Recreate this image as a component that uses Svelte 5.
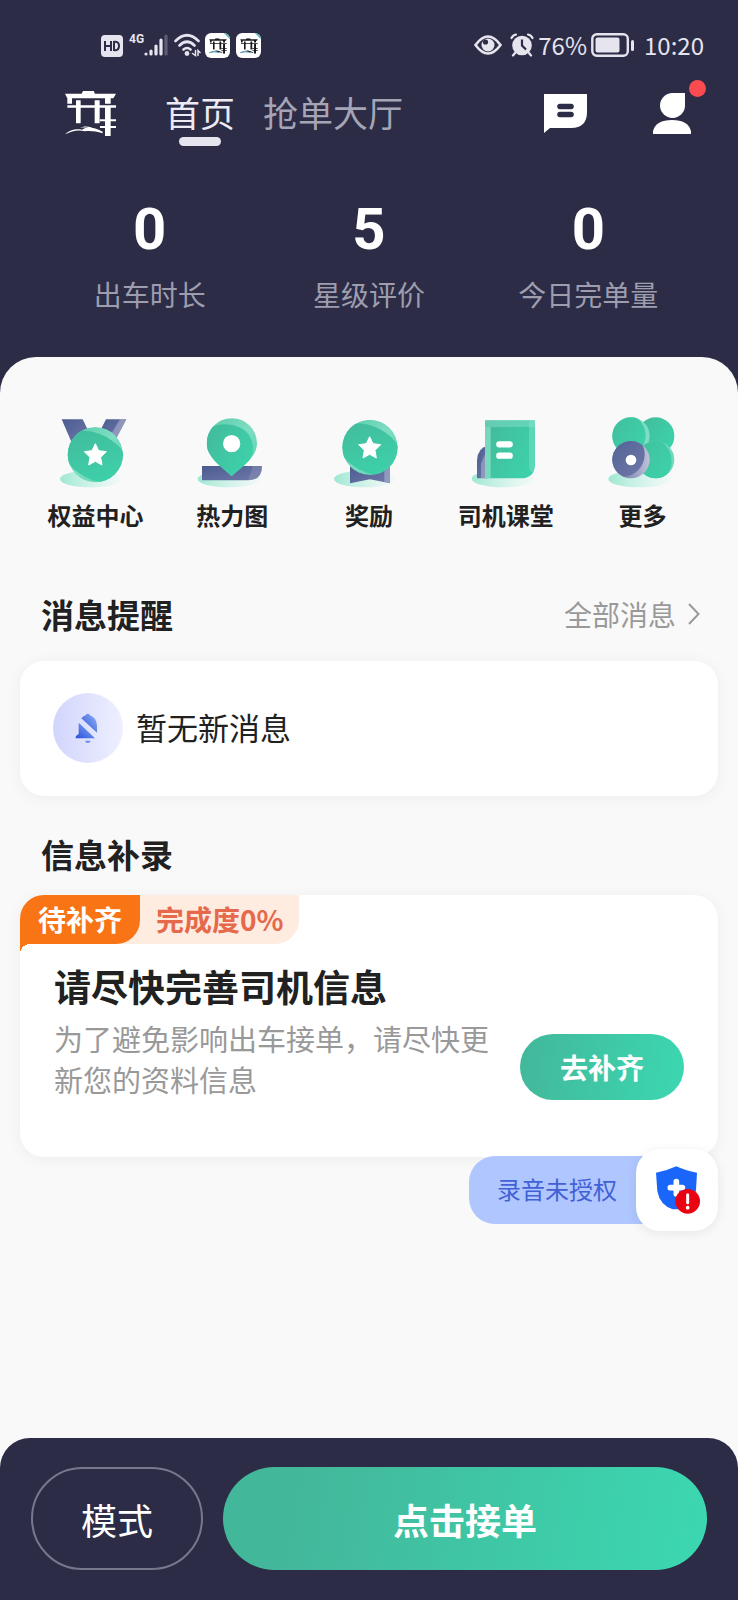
<script>
  const stats = [
    { value: '0', label: '出车时长' },
    { value: '5', label: '星级评价' },
    { value: '0', label: '今日完单量' }
  ];
  const star = 'M0 -33 L10 -12 L33 -9 L16 8 L20 31 L0 20 L-20 31 L-16 8 L-33 -9 L-10 -12 Z';
</script>

{#snippet gate()}
  <path d="M95 68 L99 60 H131 L135 68 H198 L190 82 H182 V98 H165 V82 H66 V98 H52 V82 L45 68 Z" />
  <path d="M52 103 H198 V110 H52 Z M78 88 H92 V157 H78 Z M134 88 H149 V157 H134 Z M165 103 H182 V195 H165 Z M150 145 H198 V151 H150 Z M150 165 H198 V171 H150 Z" />
  <path d="M46 190 C62 174 82 174 96 176 C112 166 130 168 158 182 L158 187 C136 180 120 179 104 181 C84 176 66 180 46 190 Z M88 171 C102 164 122 164 136 176 C118 169 104 169 88 171 Z" />
{/snippet}

{#snippet appBadge()}
  <svg class="app-badge" viewBox="0 0 24 24" aria-hidden="true">
    <rect width="24" height="24" rx="6" fill="#fff" />
    <path d="M18 0 A6 6 0 0 1 24 6 Z" fill="#5fb5ae" />
    <svg x="4" y="5" width="17" height="15" viewBox="45 60 153 135" fill="#17171c">{@render gate()}</svg>
    <path d="M4 19 q5 -2 10 0" stroke="#5a9fc0" fill="none" />
  </svg>
{/snippet}

<div class="page">
  <header>
    <div class="status">
      <div class="status-side">
        <svg width="22" height="23" viewBox="0 0 22 23" aria-hidden="true">
          <rect width="22" height="22" y="1" rx="4" fill="#e6e4ee" />
          <path d="M4 7 V17 M10 7 V17 M4 12 H10 M13 7 V17 M13 7.800 H14.500 Q18 8 18 12 Q18 16 14.500 16.200 H13" stroke="#2c2c46" stroke-width="2" fill="none" />
        </svg>
        <span class="net">4G</span>
        <svg class="signal" width="24" height="24" viewBox="0 0 24 24" stroke-width="3.200" stroke-linecap="round" stroke="#e6e4ee" aria-hidden="true">
          <path d="M2 21 V21 M7 18 V21 M12 13 V21 M17 7 V21" />
          <path d="M22 3 V21" stroke="#5d5d74" />
        </svg>
        <svg class="wifi" width="27" height="24" viewBox="0 0 27 24" fill="none" stroke="#e6e4ee" stroke-width="2.600" stroke-linecap="round" aria-hidden="true">
          <path d="M1.500 8 Q13 -3.500 24.500 8 M5.500 12.500 Q13 5 20.500 12.500 M9.500 16.500 Q13 13.500 16.500 16.500" />
          <circle cx="13" cy="20.500" r="2.400" fill="#e6e4ee" stroke="none" />
          <path d="M21.500 17.500 V22.500 L18.500 20.500 M24 22.500 V17.500 L26 19.500" stroke-width="1.500" />
        </svg>
        {@render appBadge()}
        {@render appBadge()}
      </div>
      <div class="status-side">
        <svg width="28" height="20" viewBox="0 0 28 20" aria-hidden="true">
          <path d="M1.500 10 Q14 -7 26.500 10 Q14 27 1.500 10 Z" fill="none" stroke="#e6e4ee" stroke-width="2.600" />
          <circle cx="14" cy="10" r="6.500" fill="#e6e4ee" />
          <circle cx="11.500" cy="7" r="2.600" fill="#2c2c46" />
        </svg>
        <svg class="alarm" width="24" height="24" viewBox="0 0 24 24" aria-hidden="true">
          <circle cx="12" cy="12.500" r="9.800" fill="#e6e4ee" />
          <path d="M1.500 5 Q3 2 6 1.500 M22.500 5 Q21 2 18 1.500 M5 20 L3 22.500 M19 20 L21 22.500" stroke="#e6e4ee" stroke-width="2.200" fill="none" stroke-linecap="round" />
          <path d="M12 6.500 V12.500 L16 16.500" stroke="#2c2c46" stroke-width="2.200" fill="none" />
        </svg>
        <span class="status-text">76%</span>
        <svg class="battery" width="43" height="24" viewBox="0 0 43 24" aria-hidden="true">
          <rect x="1.300" y="1.300" width="35.500" height="21.400" rx="4.500" fill="none" stroke="#e6e4ee" stroke-width="2.400" />
          <rect x="4.500" y="4.500" width="24" height="15" rx="2" fill="#e6e4ee" />
          <rect x="40" y="7" width="3" height="11" rx="1.500" fill="#e6e4ee" />
        </svg>
        <span class="status-text clock">10:20</span>
      </div>
    </div>

    <div class="topbar">
      <svg class="brand" viewBox="45 60 153 135" fill="#fff" role="img" aria-label="首页">{@render gate()}</svg>
      <nav>
        <a class="active" href="#home">首页</a>
        <a href="#hall">抢单大厅</a>
      </nav>
      <div class="actions">
        <button class="icon-button" aria-label="消息">
          <svg width="43" height="39" viewBox="0 0 43 39" aria-hidden="true">
            <path d="M0 0 H43 V18 Q43 34 27 34 H6 L0 39 Z" fill="#fff" />
            <path d="M16 12.500 H27 M16 20.500 H27" stroke="#2c2c46" stroke-width="5.600" stroke-linecap="round" />
          </svg>
        </button>
        <button class="icon-button" aria-label="我的">
          <svg width="38" height="41" viewBox="0 0 38 41" fill="#fff" aria-hidden="true">
            <path d="M19.500 0 H32 V12.500 A12.500 12.500 0 1 1 19.500 0 Z" />
            <path d="M0 41 V38 Q3 27 19 27 Q35 27 38 38 V41 Z" />
          </svg>
          <span class="dot"></span>
        </button>
      </div>
    </div>

    <div class="stats">
      {#each stats as s}
        <div class="stat"><strong>{s.value}</strong><span>{s.label}</span></div>
      {/each}
    </div>
  </header>

  <main>
    <div class="features">
      <a href="#rights">
        <svg viewBox="87 50 216 216" aria-hidden="true">
          <defs>
            <linearGradient id="green" x1="0" y1="0" x2="1" y2="0.600"><stop offset="0" stop-color="#43b99a" /><stop offset="1" stop-color="#3dd1a9" /></linearGradient>
            <linearGradient id="pale" x1="0" y1="0" x2="1" y2="1"><stop offset="0" stop-color="#54cba9" /><stop offset="0.500" stop-color="#7eddc3" /><stop offset="1" stop-color="#4fcfab" /></linearGradient>
            <linearGradient id="navy" x1="0" y1="0" x2="1" y2="1"><stop offset="0" stop-color="#4b5b90" /><stop offset="1" stop-color="#7079a9" /></linearGradient>
            <linearGradient id="lilac" x1="0" y1="0" x2="1" y2="0"><stop offset="0" stop-color="#5c659a" /><stop offset="1" stop-color="#c3c6dc" /></linearGradient>
            <linearGradient id="shade" x1="0" y1="0" x2="1" y2="0"><stop offset="0" stop-color="#9ee8d2" /><stop offset="1" stop-color="#e9f9f5" stop-opacity="0.500" /></linearGradient>
            <clipPath id="medal"><circle cx="196" cy="163" r="83" /></clipPath>
          </defs>
          <ellipse cx="182" cy="236" rx="92" ry="25" fill="url(#shade)" />
          <path d="M95 57 H158 L184 110 L124 124 Z" fill="url(#navy)" />
          <path d="M228 57 H289 L256 120 L206 100 Z" fill="url(#navy)" />
          <path d="M270 57 H289 L256 120 L238 110 Z" fill="#aeb3d0" opacity="0.600" />
          <g clip-path="url(#medal)">
            <circle cx="196" cy="163" r="83" fill="url(#pale)" />
            <ellipse cx="196" cy="169" rx="104" ry="68" transform="rotate(28 196 169)" fill="url(#green)" />
          </g>
          <path d={star} transform="translate(196 163)" fill="#fff" stroke="#fff" stroke-width="3" stroke-linejoin="round" />
        </svg>
        <span>权益中心</span>
      </a>
      <a href="#heat">
        <svg viewBox="495 50 216 216" aria-hidden="true">
          <clipPath id="pin"><path d="M602 228 C578 203 527 174 527 129 A75 75 0 0 1 678 129 C678 174 626 203 602 228 Z" /></clipPath>
          <ellipse cx="594" cy="236" rx="94" ry="25" fill="url(#shade)" />
          <path d="M513 197 H693 Q693 240 651 240 H513 Z" fill="url(#navy)" />
          <path d="M665 197 H693 Q693 240 651 240 Q660 220 665 197 Z" fill="#aeb3d0" opacity="0.250" />
          <g clip-path="url(#pin)">
            <rect x="520" y="50" width="165" height="180" fill="url(#pale)" />
            <path d="M520 92 Q575 58 628 82 Q672 105 665 160 L630 230 H520 Z" fill="url(#green)" />
          </g>
          <circle cx="602" cy="130" r="26" fill="#fff" />
        </svg>
        <span>热力图</span>
      </a>
      <a href="#reward">
        <svg viewBox="96 50 216 216" aria-hidden="true">
          <clipPath id="award"><circle cx="207" cy="141" r="83" /></clipPath>
          <ellipse cx="191" cy="236" rx="92" ry="25" fill="url(#shade)" />
          <path d="M147 190 H267 V249 L207 237 L147 249 Z" fill="url(#navy)" />
          <path d="M250 190 H267 V249 L250 245 Z" fill="#aeb3d0" opacity="0.600" />
          <g clip-path="url(#award)">
            <circle cx="207" cy="141" r="83" fill="url(#pale)" />
            <ellipse cx="205" cy="147" rx="104" ry="68" transform="rotate(28 205 147)" fill="url(#green)" />
          </g>
          <path d={star} transform="translate(206 142)" fill="#fff" stroke="#fff" stroke-width="3" stroke-linejoin="round" />
        </svg>
        <span>奖励</span>
      </a>
      <a href="#class">
        <svg viewBox="507 50 216 216" aria-hidden="true">
          <ellipse cx="606" cy="235" rx="94" ry="26" fill="url(#shade)" />
          <path d="M528 234 V180 Q530 142 560 136 V234 Z" fill="url(#navy)" />
          <path d="M540 234 V190 L552 160 V234 Z" fill="#c3c6dc" opacity="0.450" />
          <path d="M552 60 H702 V190 Q702 234 658 234 H552 Z" fill="url(#green)" />
          <path d="M552 60 H702 V80 H552 Z" fill="#8ee3cb" opacity="0.450" />
          <path d="M552 80 H569 V234 H552 Z" fill="#9ee8d2" opacity="0.600" />
          <path d="M684 60 H702 V190 Q702 205 696 214 Q684 220 684 190 Z" fill="#8ee3cb" opacity="0.400" />
          <path d="M595 132 H626 M595 166 H626" stroke="#fff" stroke-width="19" stroke-linecap="round" />
        </svg>
        <span>司机课堂</span>
      </a>
      <a href="#more">
        <svg viewBox="138 50 216 216" aria-hidden="true">
          <clipPath id="leafA"><circle cx="210" cy="107" r="56" /></clipPath>
          <clipPath id="leafB"><circle cx="284" cy="178" r="56" /></clipPath>
          <clipPath id="leafC"><circle cx="210" cy="178" r="56" /></clipPath>
          <ellipse cx="236" cy="236" rx="94" ry="25" fill="url(#shade)" />
          <circle cx="284" cy="107" r="56" fill="url(#green)" />
          <g clip-path="url(#leafA)"><rect x="150" y="50" width="120" height="120" fill="#7eddc3" /><circle cx="190" cy="105" r="64" fill="url(#green)" /></g>
          <g clip-path="url(#leafB)"><rect x="226" y="120" width="120" height="120" fill="#6fdabc" /><circle cx="262" cy="182" r="70" fill="url(#green)" /></g>
          <g clip-path="url(#leafC)"><rect x="150" y="120" width="120" height="120" fill="url(#lilac)" /><circle cx="184" cy="162" r="67" fill="url(#navy)" /></g>
          <circle cx="210" cy="179" r="16" fill="#fff" />
        </svg>
        <span>更多</span>
      </a>
    </div>

    <section class="messages">
      <div class="section-head">
        <h2>消息提醒</h2>
        <a href="#messages">全部消息
          <svg width="12" height="22" viewBox="0 0 12 22" fill="none" stroke="#999" stroke-width="2" aria-hidden="true"><path d="M1 1 L10.500 11 L1 21" /></svg>
        </a>
      </div>
      <div class="card notice">
        <svg width="70" height="70" viewBox="0 0 210 210" aria-hidden="true">
          <defs>
            <linearGradient id="disc"><stop offset="0" stop-color="#d2d5fc" /><stop offset="1" stop-color="#eef0ff" /></linearGradient>
            <linearGradient id="bell" x1="0" y1="1" x2="1" y2="0"><stop offset="0" stop-color="#2b50dc" /><stop offset="1" stop-color="#91b3f3" /></linearGradient>
          </defs>
          <circle cx="105" cy="105" r="105" fill="url(#disc)" />
          <path d="M85 76 Q91 69 98 67 Q98 62 104 62 Q110 62 111 67 Q132 75 132 99 V119 Z" fill="url(#bell)" />
          <path d="M77 89 L126 136 H68 Q66 129 77 123 Z" fill="url(#bell)" />
          <path d="M96 143 H113 Q111 150 104 150 Q98 150 96 143 Z" fill="#6d8ce8" />
        </svg>
        <span>暂无新消息</span>
      </div>
    </section>

    <section class="supplement">
      <div class="section-head"><h2>信息补录</h2></div>
      <div class="card task">
        <div class="tags">
          <span class="tag-state">待补齐</span>
          <span class="tag-progress">完成度0%</span>
        </div>
        <div class="task-body">
          <h3>请尽快完善司机信息</h3>
          <div class="task-row">
            <p>为了避免影响出车接单，请尽快更新您的资料信息</p>
            <button class="fill-button">去补齐</button>
          </div>
        </div>
      </div>
      <button class="record">
        <span class="record-label">录音未授权</span>
        <span class="record-icon">
          <svg width="46" height="48" viewBox="-4 0 138 144" aria-hidden="true">
            <path d="M2 20 Q36 14 63 1 Q90 14 125 20 L122 72 Q118 108 88 130 H52 Q14 118 6 76 Z" fill="#1a66fa" />
            <path d="M63 47 V83 M45 65 H81" stroke="#fff" stroke-width="17" stroke-linecap="round" />
            <circle cx="97" cy="106" r="37" fill="#ea0212" />
            <path d="M97 86 V110" stroke="#fff" stroke-width="9" stroke-linecap="round" />
            <circle cx="97" cy="125" r="5.500" fill="#fff" />
          </svg>
        </span>
      </button>
    </section>
  </main>

  <footer>
    <div class="dock">
      <button class="mode">模式</button>
      <button class="accept">点击接单</button>
    </div>
  </footer>
</div>

<style>
  :global(body) {
    margin: 0;
    background: #2c2c46;
  }
  .page {
    display: flex;
    flex-direction: column;
    min-height: 100vh;
    background: #2c2c46;
    color: #212121;
    font-family: 'Noto Sans CJK SC', 'Noto Sans', sans-serif;
  }
  .page * {
    box-sizing: border-box;
  }
  svg {
    display: block;
    flex: none;
  }
  a {
    color: inherit;
    text-decoration: none;
  }
  button {
    border: 0;
    padding: 0;
    background: none;
    color: inherit;
    font-family: inherit;
    cursor: pointer;
  }
  h2, h3, p {
    margin: 0;
  }
  header {
    padding: 33px 0 43px;
  }
  .status {
    display: flex;
    justify-content: space-between;
    padding: 0 34px 0 101px;
    color: #e6e4ee;
  }
  .status-side {
    display: flex;
    align-items: center;
    height: 24px;
  }
  .net {
    align-self: flex-start;
    margin-left: 6px;
    font: bold 12px/12px Roboto, sans-serif;
  }
  .wifi {
    margin: 0 4px 0 6px;
  }
  .app-badge {
    width: 25px;
    height: 25px;
    margin-right: 6px;
  }
  .alarm {
    margin: 0 4px 0 8px;
  }
  .status-text {
    font-size: 24px;
    line-height: 24px;
  }
  .battery {
    margin: 0 10px 0 4px;
  }
  .topbar {
    display: flex;
    align-items: center;
    height: 60px;
    margin-top: 26px;
    padding: 0 47px 0 65px;
  }
  .brand {
    width: 51px;
    height: 45px;
  }
  nav {
    display: flex;
    gap: 28px;
    margin-left: 49px;
    font-size: 35px;
    line-height: 58px;
    padding-bottom: 2px;
    color: #a5a5b5;
  }
  nav a {
    position: relative;
  }
  nav .active {
    color: #eceaf4;
  }
  .active::after {
    content: '';
    position: absolute;
    left: calc(50% - 21px);
    bottom: -5px;
    width: 42px;
    height: 9px;
    border-radius: 5px;
    background: #e6e4ee;
  }
  .actions {
    display: flex;
    gap: 66px;
    margin-left: auto;
  }
  .icon-button {
    position: relative;
  }
  .dot {
    position: absolute;
    top: -13px;
    right: -15px;
    width: 17px;
    height: 17px;
    border-radius: 50%;
    background: #fb4b50;
  }
  .stats {
    display: grid;
    grid-template-columns: repeat(3, 1fr);
    margin-top: 58px;
    padding: 0 40px;
  }
  .stat {
    display: flex;
    flex-direction: column;
    gap: 17px;
    text-align: center;
  }
  .stat strong {
    font-family: Roboto, sans-serif;
    font-size: 58px;
    line-height: 56px;
    color: #fff;
  }
  .stat span {
    font-size: 28px;
    line-height: 40px;
    color: #9d9dae;
  }
  main {
    flex: 1;
    padding: 60px 20px 40px;
    border-radius: 36px 36px 0 0;
    background: #f9f9f9;
  }
  .features {
    display: grid;
    grid-template-columns: repeat(5, 1fr);
    padding: 0 7px;
  }
  .features a {
    display: flex;
    flex-direction: column;
    align-items: center;
    gap: 10px;
    font-size: 24px;
    font-weight: 600;
    line-height: 32px;
    white-space: nowrap;
  }
  .features svg {
    width: 72px;
    height: 72px;
  }
  .section-head {
    display: flex;
    align-items: center;
    justify-content: space-between;
    padding: 0 18px 0 21px;
    line-height: 44px;
  }
  h2 {
    font-size: 33px;
    font-weight: 700;
  }
  .section-head a {
    display: flex;
    align-items: center;
    gap: 12px;
    font-size: 28px;
    color: #999;
  }
  .messages {
    margin-top: 61px;
  }
  .supplement {
    position: relative;
    margin-top: 36px;
  }
  .card {
    margin-top: 25px;
    border-radius: 24px;
    background: #fff;
    box-shadow: 0 2px 16px rgba(0, 0, 0, 0.05);
  }
  .notice {
    display: flex;
    align-items: center;
    gap: 13px;
    padding: 32px 33px 33px;
    font-size: 31px;
  }
  .notice span {
    padding-bottom: 3px;
  }
  .task {
    margin-top: 19px;
    overflow: hidden;
  }
  .tags {
    display: flex;
    width: fit-content;
    border-radius: 0 0 24px 0;
    background: #ffece0;
    font-size: 28px;
    font-weight: 700;
    line-height: 49px;
  }
  .tag-state {
    position: relative;
    padding: 0 18px;
    border-radius: 0 0 24px 0;
    background: #f97415;
    color: #fff;
  }
  .tag-state::after {
    content: '';
    position: absolute;
    top: 100%;
    left: 0;
    width: 10px;
    height: 10px;
    background: radial-gradient(circle at 100% 100%, transparent 10px, #f97415 10px);
  }
  .tag-progress {
    padding: 0 15px 0 16px;
    color: #e5694a;
  }
  .task-body {
    padding: 20px 34px 57px;
  }
  h3 {
    font-size: 37px;
    font-weight: 700;
    line-height: 44px;
  }
  .task-row {
    display: flex;
    align-items: flex-end;
    justify-content: space-between;
    gap: 24px;
    margin-top: 10px;
  }
  p {
    font-size: 29px;
    line-height: 41px;
    color: #999;
  }
  .fill-button {
    flex: none;
    width: 164px;
    height: 66px;
    border-radius: 33px;
    background: linear-gradient(100deg, #43b79a, #3bd8b1);
    color: #fff;
    font-size: 28px;
    font-weight: 700;
  }
  .record {
    position: absolute;
    top: calc(100% - 8px);
    right: 0;
    display: flex;
    align-items: center;
  }
  .record-label {
    height: 68px;
    margin-right: -24px;
    padding: 0 43px 0 28px;
    border-radius: 26px 0 0 26px;
    background: #b0c6ff;
    color: #4261d5;
    font-size: 24px;
    line-height: 66px;
  }
  .record-icon {
    position: relative;
    display: grid;
    place-items: center;
    width: 82px;
    height: 82px;
    border-radius: 24px;
    background: #fff;
    box-shadow: 0 2px 12px rgba(0, 0, 0, 0.08);
  }
  footer {
    background: #f9f9f9;
  }
  .dock {
    display: flex;
    gap: 20px;
    padding: 29px 31px 30px;
    border-radius: 30px 30px 0 0;
    background: #2c2c46;
  }
  .dock button {
    height: 103px;
    border-radius: 52px;
    color: #fff;
    font-size: 36px;
  }
  .dock .mode {
    flex: none;
    width: 172px;
    border: 2px solid #77778e;
  }
  .dock .accept {
    flex: 1;
    background: linear-gradient(100deg, #43b79a 15%, #3bd8b1);
    font-weight: 700;
  }
</style>
